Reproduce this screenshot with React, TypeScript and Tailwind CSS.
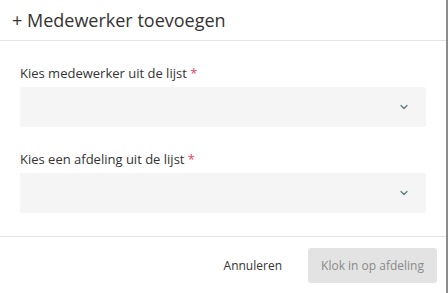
import { ChevronDown } from 'lucide-react'

function SelectField({ label }: { label: string }) {
  return (
    <div className="flex flex-col">
      <label className="text-[13px] leading-[18px] text-[#333] mb-[5px]">
        {label} <span className="text-[#e8445f]">*</span>
      </label>
      <div className="h-10 bg-[#f5f5f5] rounded-[2px] flex items-center justify-end pr-[16px]">
        <ChevronDown size={12} strokeWidth={2.5} className="text-[#5f7782]" />
      </div>
    </div>
  )
}

export default function App() {
  return (
    <div
      className="w-[448px] h-[293px] bg-white border-r-2 border-[#8c8c8c] flex flex-col"
      style={{ fontFamily: '"Open Sans", "Liberation Sans", sans-serif' }}
    >
      {/* kop */}
      <div className="h-[41px] px-3 flex items-center border-b border-[#e3e3e3] text-[18px] text-[#333]">
        + Medewerker toevoegen
      </div>

      {/* formulier */}
      <div className="px-5 pt-[23px] pb-[23px] flex flex-col gap-[23px]">
        <SelectField label="Kies medewerker uit de lijst" />
        <SelectField label="Kies een afdeling uit de lijst" />
      </div>

      {/* knoppen */}
      <div className="border-t border-[#e3e3e3] pt-[11px] pr-[9px] flex justify-end items-center gap-[26px]">
        <button className="text-[12px] text-[#333]">Annuleren</button>
        <button
          disabled
          className="h-[35px] w-[129px] bg-[#e3e3e3] rounded-[3px] text-[12px] text-[#8a8a8a]"
        >
          Klok in op afdeling
        </button>
      </div>
    </div>
  )
}
